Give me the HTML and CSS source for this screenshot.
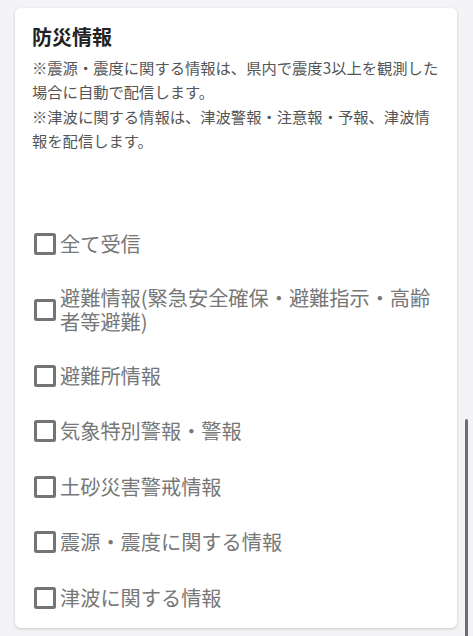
FILE: index.html
```html
<!DOCTYPE html>
<html lang="ja">
<head>
<meta charset="utf-8">
<title>防災情報</title>
<link rel="stylesheet" href="styles.css">
</head>
<body>
<div class="card">
  <h2 class="title">防災情報</h2>
  <p class="note">※震源・震度に関する情報は、県内で震度3以上を観測した場合に自動で配信します。<br>※津波に関する情報は、津波警報・注意報・予報、津波情報を配信します。</p>
  <ul class="options">
    <li class="option"><label class="opt-label"><input type="checkbox" class="box"><span class="text">全て受信</span></label></li>
    <li class="option"><label class="opt-label"><input type="checkbox" class="box"><span class="text">避難情報(緊急安全確保・避難指示・高齢者等避難)</span></label></li>
    <li class="option"><label class="opt-label"><input type="checkbox" class="box"><span class="text">避難所情報</span></label></li>
    <li class="option"><label class="opt-label"><input type="checkbox" class="box"><span class="text">気象特別警報・警報</span></label></li>
    <li class="option"><label class="opt-label"><input type="checkbox" class="box"><span class="text">土砂災害警戒情報</span></label></li>
    <li class="option"><label class="opt-label"><input type="checkbox" class="box"><span class="text">震源・震度に関する情報</span></label></li>
    <li class="option"><label class="opt-label"><input type="checkbox" class="box"><span class="text">津波に関する情報</span></label></li>
  </ul>
</div>
<div class="scrollbar"></div>
</body>
</html>
```
FILE: styles.css
```css
html, body {
  margin: 0;
  padding: 0;
}
body {
  background: #f4f4f6;
  padding: 8px 16px 0 15px;
  font-family: "Noto Sans CJK JP", "Noto Sans", sans-serif;
  height: 636px;
  box-sizing: border-box;
  overflow: hidden;
}
.card {
  width: 442px;
  box-sizing: border-box;
  background: #fff;
  border-radius: 6px;
  box-shadow: 0 1px 3px rgba(0, 0, 0, 0.18);
  padding: 15px 16px 2px 17px;
}
.title {
  margin: 0 0 4px;
  font-size: 20px;
  line-height: 28px;
  font-weight: 700;
  color: #222;
}
.note {
  margin: 0;
  font-size: 15.3px;
  line-height: 24.3px;
  color: #555;
}
.options {
  list-style: none;
  margin: 64.5px 0 0;
  padding: 0;
}
.option {
  padding: 14px 0;
}
.opt-label {
  display: flex;
  align-items: center;
  min-height: 27.5px;
}
.box {
  appearance: none;
  -webkit-appearance: none;
  flex: none;
  width: 22px;
  height: 22px;
  margin: 0 4px 0 2px;
  border: 3px solid #747474;
  border-radius: 2.5px;
  box-sizing: border-box;
  background: #fff;
}
.text {
  font-size: 20.2px;
  line-height: 24px;
  color: #777;
}
.scrollbar {
  position: fixed;
  left: 465px;
  top: 419px;
  width: 3px;
  height: 240px;
  border-radius: 1.5px;
  background: #6e6e6e;
}
```
